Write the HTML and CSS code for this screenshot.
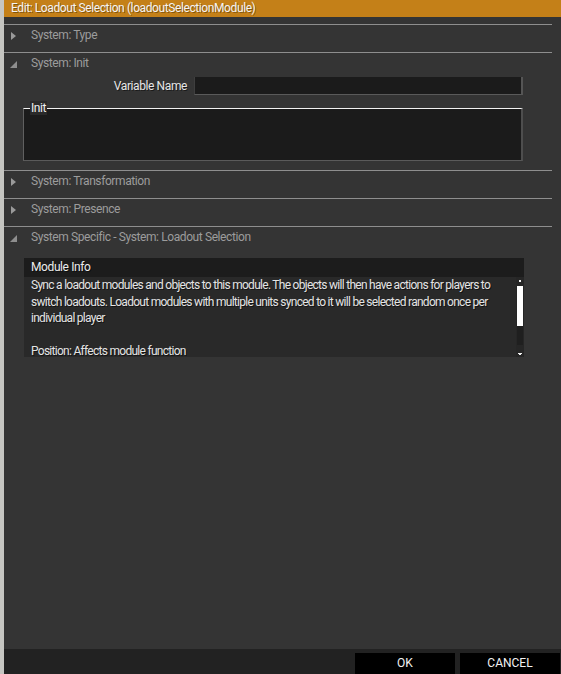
FILE: index.html
```html
<!DOCTYPE html>
<html lang="en">
<head>
<meta charset="utf-8">
<title>Edit: Loadout Selection</title>
<link rel="stylesheet" href="styles.css">
</head>
<body>
<div class="desktop-edge"></div>
<div class="window">
  <div class="titlebar">Edit: Loadout Selection (loadoutSelectionModule)</div>

  <div class="sections">
    <div class="section">
      <div class="section-head"><span class="arrow closed"></span>System: Type</div>
    </div>

    <div class="section">
      <div class="section-head"><span class="arrow open"></span>System: Init</div>
      <div class="section-body init-body">
        <div class="field-row">
          <label class="field-label">Variable Name</label>
          <div class="text-input"></div>
        </div>
        <div class="group-box">
          <span class="group-title">Init</span>
        </div>
      </div>
    </div>

    <div class="section">
      <div class="section-head"><span class="arrow closed"></span>System: Transformation</div>
    </div>

    <div class="section">
      <div class="section-head"><span class="arrow closed"></span>System: Presence</div>
    </div>

    <div class="section">
      <div class="section-head"><span class="arrow open"></span>System Specific - System: Loadout Selection</div>
      <div class="section-body">
        <div class="module-info">
          <div class="module-info-head">Module Info</div>
          <div class="module-info-body">
            <div class="module-info-text">Sync a loadout modules and objects to this module. The objects will then have actions for players to<br>switch loadouts. Loadout modules with multiple units synced to it will be selected random once per<br>individual player<br><br>Position: Affects module function</div>
            <div class="scrollbar">
              <span class="scroll-btn"></span>
              <span class="scroll-track"><span class="scroll-thumb"></span></span>
              <span class="scroll-btn down"></span>
            </div>
          </div>
        </div>
      </div>
    </div>
  </div>

  <div class="button-bar">
    <button class="btn">OK</button>
    <button class="btn">CANCEL</button>
  </div>
</div>
</body>
</html>
```
FILE: styles.css
```css
html, body {
  margin: 0;
  padding: 0;
  height: 100%;
}

body {
  display: flex;
  background: #343434;
  font-family: "Roboto", "Liberation Sans", sans-serif;
  font-size: 12px;
  letter-spacing: -0.4px;
  overflow: hidden;
}

.desktop-edge {
  width: 4px;
  flex: none;
  background: #c6c6c2;
}

.window {
  flex: 1;
  min-width: 0;
  display: flex;
  flex-direction: column;
  height: 674px;
  background: #343434;
}

.titlebar {
  height: 17px;
  flex: none;
  background: #c48018;
  color: #f4f4f4;
  line-height: 16px;
  padding-left: 7px;
  text-shadow: 1px 1px 0 rgba(0, 0, 0, 0.35);
}

.sections {
  flex: 1;
  min-width: 0;
  padding-top: 7px;
  margin-right: 9px;
}

.section {
  border-top: 1px solid #8e8e8e;
}

.section-head {
  position: relative;
  height: 27px;
  line-height: 20px;
  padding-left: 27px;
  color: #9c9c9c;
}

.arrow {
  position: absolute;
  left: 7px;
  top: 7px;
  width: 0;
  height: 0;
}

.arrow.closed {
  border-top: 4px solid transparent;
  border-bottom: 4px solid transparent;
  border-left: 5px solid #9a9a9a;
}

.arrow.open {
  left: 6px;
  top: 8px;
  border-left: 7px solid transparent;
  border-bottom: 7px solid #8e8e8e;
}

.init-body {
  padding: 0 29px 9px 19px;
  display: flex;
  flex-direction: column;
}

.field-row {
  display: flex;
  align-items: center;
  justify-content: flex-end;
  gap: 7px;
  margin-top: -4px;
  height: 19px;
}

.field-label {
  color: #e6e6e6;
  text-shadow: 1px 1px 0 rgba(0, 0, 0, 0.5);
}

.text-input {
  width: 326px;
  height: 17px;
  background: #1b1b1b;
  border-left: 1px solid #3e3e3e;
  border-right: 2px solid #555;
  border-bottom: 1px solid #5a5a5a;
}

.group-box {
  position: relative;
  margin-top: 13px;
  height: 51px;
  background: #1b1b1b;
  border-top: 1px solid #f2f2f2;
  border-left: 1px solid #606060;
  border-right: 2px solid #4e4e4e;
  border-bottom: 1px solid #5a5a5a;
}

.group-title {
  position: absolute;
  left: 6px;
  top: -8px;
  padding: 0 1px;
  line-height: 14px;
  color: #f0f0f0;
  background: #2a2a2a;
}

.module-info {
  margin: 4px 28px 0 20px;
}

.module-info-head {
  height: 19px;
  line-height: 19px;
  padding-left: 7px;
  background: #1c1c1c;
  color: #ececec;
  text-shadow: 1px 1px 0 rgba(0, 0, 0, 0.5);
}

.module-info-body {
  display: flex;
  height: 80px;
  background: #292929;
}

.module-info-text {
  flex: 1;
  min-width: 0;
  overflow: hidden;
  white-space: nowrap;
  padding: 0 0 0 7px;
  line-height: 16.5px;
  letter-spacing: -0.72px;
  color: #e4e4e4;
  text-shadow: 1px 1px 0 rgba(0, 0, 0, 0.55);
}

.scrollbar {
  width: 8px;
  flex: none;
  display: flex;
  flex-direction: column;
  align-items: center;
  background: #262626;
}

.scroll-btn {
  position: relative;
  width: 8px;
  height: 9px;
  flex: none;
}

.scroll-btn::after {
  content: "";
  position: absolute;
  left: 3px;
  top: 3px;
  width: 2px;
  height: 2px;
  background: #f2f2f2;
}

.scroll-btn.down::after {
  top: 5px;
  left: 2px;
  width: 4px;
  height: 1px;
}

.scroll-btn.down::before {
  content: "";
  position: absolute;
  left: 3px;
  top: 6px;
  width: 2px;
  height: 1px;
  background: #f2f2f2;
}

.scroll-track {
  flex: 1;
  width: 6px;
  background: #1f1f1f;
  margin-bottom: 3px;
}

.scroll-thumb {
  display: block;
  height: 40px;
  background: #ffffff;
}

.button-bar {
  flex: none;
  height: 25px;
  background: #222222;
  display: flex;
  justify-content: flex-end;
  align-items: flex-end;
  gap: 5px;
  padding-right: 1px;
}

.btn {
  width: 100px;
  height: 21px;
  margin: 0;
  padding: 0;
  border: none;
  background: #000;
  color: #f2f2f2;
  font-family: "Roboto", "Liberation Sans", sans-serif;
  font-size: 12px;
  line-height: 21px;
}
```
